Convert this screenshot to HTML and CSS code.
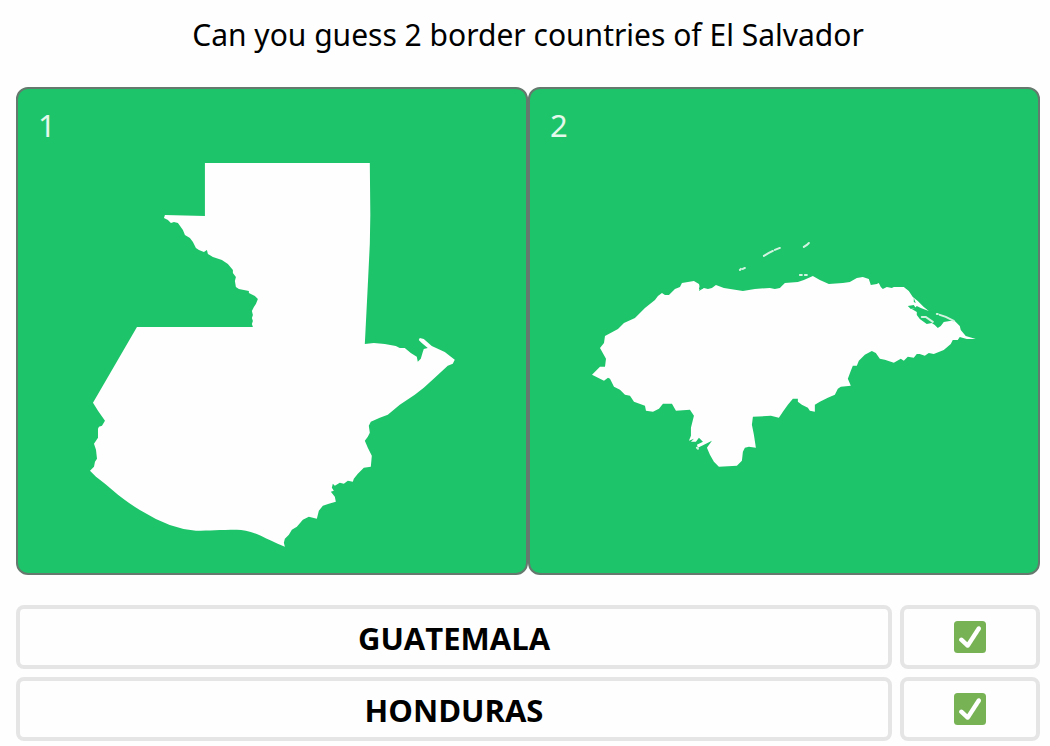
FILE: index.html
```html
<!DOCTYPE html>
<html lang="en">
<head>
<meta charset="utf-8">
<meta name="viewport" content="width=device-width, initial-scale=1">
<title>Border countries of El Salvador</title>
<link rel="stylesheet" href="styles.css">
</head>
<body>
<main class="game">
  <h1 class="question">Can you guess 2 border countries of El Salvador</h1>
  <section class="cards">
    <article class="card">
      <span class="card-number">1</span>
      <svg class="shape" viewBox="80 163 384 384" role="img" aria-label="Outline of Guatemala">
        <path d="M205 163H370L370.500 215 370 244 368 285 365 344 374 343 385 344 396 346 400 348 405 348 411 353 417 357 418 362 421 359 423 352 424 349 428 348 422 343 419 340 420 338 424 339 432 346 445 352 455 360 453 364 448 366 435 378 424 388 415 395 400 405 388 415 380 418 371 422 369 426 370 433 368 437 365 441 368 448 372 456 371 467 364 468 358 474 354 479 353 482 348 481 344 484 340 483 335 486 333 484 332 488 334 491 331 492 335 497 336 502 329 504 323 506 319 511 317 519 313 518 309 517 303 520 297 527 292 530 289 535 285 539 284 543 285 547C275 543 267 539 261 536Q247 530 237 530C220 530 209 531 196 531Q170 529 143 512Q132 506 118 495L105 484 96 477 90 471 94 467 95 462 97 459 96 450 94 444 98 438 98 429 99 427 102 426 105 421 98 411 93 403 137 327H253L252 324 253 321 252 318 253 315 252 311 254 307 256 304 258 299 255 296 249 293 249 291 239 289 236 287 235 281 236 277 233 273 233 270 228 264 222 260 219 259 213 257 208 254 207 250 204 252 199 250 196 248 193 242 190 238 185 235 183 230 178 223 174 222 171 223 168 220 164 218 165 215 205 216Z"/>
      </svg>
    </article>
    <article class="card">
      <span class="card-number">2</span>
      <svg class="shape" viewBox="592 163 384 384" role="img" aria-label="Outline of Honduras">
        <path d="M605 336 618 329 624 323 635 318 645 308 655 300 658 296 662 293 665 295 669 295 675 289 680 287 682 283 688 282 694 281 699 284 700 287 699 291 704 288 708 289 712 288 716 285 724 288 743 291 755 289 770 288 775 289 780 288 785 283 798 282 804 280 813 276 820 280 829 284 843 283 850 282 857 278 863 277 869 279 871 285 877 284 879 283 881 287 883 289 887 287 892 288 894 287 904 287 909 291 913 297 918 301 924 307 929 311 921 308 917 306 915 308 912 309 917 312 917 315 920 319 927 324 932 323 935 325 938 328 941 326 944 322 950 321 955 321 960 326 961 330 966 336 976 339 967 339 960 337 958 340 953 340 951 344 944 350 934 354 929 353 925 356 920 354 917 354 914 358 908 357 904 361 901 359 894 363 885 360 880 359 876 353 872 351 865 355 859 361 857 366 853 366 851 371 848 379 851 386 841 387 838 389 835 395 828 398 820 402 815 405 815 412 810 411 808 408 802 405 798 402 798 399 793 399 788 405 783 412 779 418 771 416 753 417 752 425 754 435 756 448 749 447 745 448 743 452 742 461 737 466 719 467 714 462 710 455 707 448 712 441 704 445 698 448 697 445 703 442 699 438 696 442 691 442 694 439 689 441 691 436 691 428 694 416 690 410 676 411 672 404 663 404 659 409 653 412 646 411 645 406 634 402 630 396 625 395 620 390 614 387 610 379 608 378 604 381 592 375 600 367 605 367 606 359 600 348 604 343Z"/>
        <path class="islands" d="M740 270 741 269M743 269 745 268M764 256 769 253 773 251M775 250 780 248M804 247 807 245 809 243M800 275H802M805 275H807M937 314H938M940 315 946 317 954 321M922 317 926 317 933 322M697 448 698 449"/>
        <path class="lagoon" d="M700 285 703 289 699 289ZM908 306 914 305 916 308 911 309ZM914 298 916 303 914 302Z"/>
      </svg>
    </article>
  </section>
  <section class="guesses">
    <div class="guess"><div class="cell name">GUATEMALA</div><div class="cell">
      <svg class="check" viewBox="0 0 36 36" role="img" aria-label="Correct"><rect width="36" height="36" rx="4" fill="#77b255"/><path fill="#fff" d="M29.280 6.362c-1.156-.751-2.704-.422-3.458.736L14.936 23.877l-5.029-4.650c-1.014-.938-2.596-.875-3.533.138-.937 1.014-.875 2.596.139 3.533l7.209 6.666c.480.445 1.090.665 1.696.665.673 0 1.534-.282 2.099-1.139.332-.506 12.500-19.270 12.500-19.270.751-1.159.421-2.707-.737-3.458z"/></svg>
    </div></div>
    <div class="guess"><div class="cell name">HONDURAS</div><div class="cell">
      <svg class="check" viewBox="0 0 36 36" role="img" aria-label="Correct"><rect width="36" height="36" rx="4" fill="#77b255"/><path fill="#fff" d="M29.280 6.362c-1.156-.751-2.704-.422-3.458.736L14.936 23.877l-5.029-4.650c-1.014-.938-2.596-.875-3.533.138-.937 1.014-.875 2.596.139 3.533l7.209 6.666c.480.445 1.090.665 1.696.665.673 0 1.534-.282 2.099-1.139.332-.506 12.500-19.270 12.500-19.270.751-1.159.421-2.707-.737-3.458z"/></svg>
    </div></div>
  </section>
</main>
</body>
</html>
```
FILE: styles.css
```css
* { box-sizing: border-box; }
body {
  margin: 0;
  background: #fefefe;
  color: #000;
  font-family: "Segoe UI", "Noto Sans", "Open Sans", sans-serif;
}
.game { padding: 15px 10px 5px 16px; }
.question {
  margin: 0 0 32px;
  font-size: 30px;
  font-weight: 400;
  line-height: 40px;
  text-align: center;
}
.cards {
  display: grid;
  grid-template-columns: 1fr 1fr;
  margin-bottom: 30px;
}
.card {
  display: flex;
  flex-direction: column;
  gap: 18px;
  padding: 16px 20px 26px;
  border: 2px solid #66796e;
  border-radius: 12px;
  background: #1ec46a;
}
.card-number {
  color: #e4f9ec;
  font-size: 31px;
  line-height: 40px;
}
.shape {
  width: 82%;
  aspect-ratio: 1;
  align-self: center;
  fill: #fefefe;
}
.islands {
  fill: none;
  stroke: #d3f4e0;
  stroke-width: 2;
  stroke-linecap: round;
}
.lagoon { fill: #1ec46a; }
.guesses { display: grid; gap: 8px; }
.guess {
  display: grid;
  grid-template-columns: 1fr 140px;
  gap: 8px;
}
.cell {
  display: flex;
  align-items: center;
  justify-content: center;
  height: 64px;
  border: 4px solid #e5e5e5;
  border-radius: 8px;
}
.name {
  padding-top: 2px;
  font-family: "Segoe UI", "Open Sans", "Noto Sans", sans-serif;
  font-size: 31px;
  font-weight: 700;
}
.check { width: 32px; height: 32px; }
```
